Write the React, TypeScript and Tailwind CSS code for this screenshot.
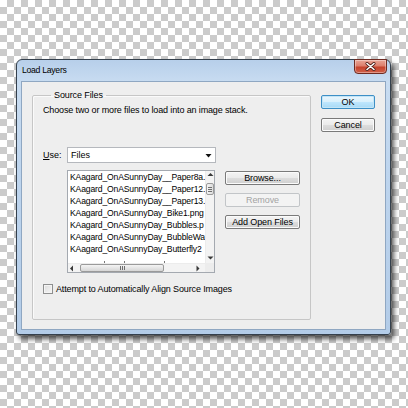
import React from "react";

const files = [
  "KAagard_OnASunnyDay__Paper8a.",
  "KAagard_OnASunnyDay__Paper12.",
  "KAagard_OnASunnyDay__Paper13.",
  "KAagard_OnASunnyDay_Bike1.png",
  "KAagard_OnASunnyDay_Bubbles.p",
  "KAagard_OnASunnyDay_BubbleWa",
  "KAagard_OnASunnyDay_Butterfly2",
];

function Tri({ dir }: { dir: "up" | "down" | "left" | "right" }) {
  const pts =
    dir === "up"
      ? "0.5,4 3.5,1 6.5,4"
      : dir === "down"
      ? "0.5,1.5 3.5,4.5 6.5,1.5"
      : dir === "left"
      ? "4,0.5 1,3.5 4,6.5"
      : "1.5,0.5 4.5,3.5 1.5,6.5";
  return (
    <svg width="7" height="7" viewBox="0 0 7 7" className="block">
      <polygon points={pts} fill="#3a3a3a" />
    </svg>
  );
}

function Btn({
  children,
  disabled,
  primary,
  w,
}: {
  children: React.ReactNode;
  disabled?: boolean;
  primary?: boolean;
  w: string;
}) {
  return (
    <div
      className={
        "h-[14px] flex items-center justify-center rounded-[2px] border text-[9px] tracking-[-0.1px] leading-none " +
        w +
        " " +
        (disabled
          ? "border-[#c2c5c8] bg-[#f3f3f3] text-[#a3a3a3]"
          : primary
          ? "border-[#3d8fc6] bg-[linear-gradient(180deg,#eaf6fd_0%,#d9f0fc_48%,#bee6fd_52%,#a7d9f5_100%)] text-black shadow-[inset_0_0_0_1px_#c4e5f6]"
          : "border-[#7a7a7a] bg-[linear-gradient(180deg,#f4f4f4_0%,#ebebeb_48%,#dddddd_52%,#cfcfcf_100%)] text-black shadow-[inset_0_0_0_1px_#fbfbfb]")
      }
    >
      {children}
    </div>
  );
}

export default function App() {
  return (
    <div className="w-[408px] h-[408px] overflow-hidden bg-[image:repeating-conic-gradient(#cbcbcb_0%_25%,#ffffff_0%_50%)] bg-[length:14px_14px] pt-[59px] pl-[16px] font-['Liberation_Sans',Arial,sans-serif] text-black">
      <div className="w-[375px] h-[276px] flex flex-col rounded-t-[6px] rounded-b-[3px] border border-[#34404d] bg-[linear-gradient(180deg,#b7cfea_0%,#c8dcf1_8%,#bed5ee_40%,#b3cce8_100%)] shadow-[3px_4px_5px_rgba(0,0,0,0.65)]">
        {/* title bar */}
        <div className="h-[21px] flex items-start justify-between pl-[5px] pr-[3px]">
          <span className="text-[8.7px] leading-[20px] tracking-[-0.3px]">Load Layers</span>
          <div className="-mt-px w-[33px] h-[15px] flex items-center justify-center rounded-b-[4px] border border-[#6e2b22] bg-[linear-gradient(180deg,#e9a596_0%,#dc7f6d_45%,#c5432d_55%,#d0614a_100%)] shadow-[inset_0_0_0_1px_rgba(255,255,255,0.35)]">
            <svg width="11" height="9" viewBox="0 0 11 9">
              <path d="M2 1.5 L9 7.5 M9 1.5 L2 7.5" stroke="#4a1a14" strokeWidth="3" strokeLinecap="round" />
              <path d="M2 1.5 L9 7.5 M9 1.5 L2 7.5" stroke="#ffffff" strokeWidth="1.6" strokeLinecap="round" />
            </svg>
          </div>
        </div>
        {/* client area */}
        <div className="mx-[4px] mb-[4px] flex-1 border border-[#8fa7c2] bg-[#eeeeee] pt-[7px] pl-[10px] flex items-start gap-[10px]">
          <fieldset className="w-[279px] h-[231px] border border-[#c6c6c6] rounded-[2px] px-[10px] pt-[3px] shadow-[inset_1px_1px_0_#fafafa]">
            <legend className="ml-[8px] px-[3px] text-[9px] tracking-[-0.1px] leading-[12px]">Source Files</legend>
            <div className="text-[9px] tracking-[-0.13px] leading-[12px] whitespace-nowrap">
              Choose two or more files to load into an image stack.
            </div>
            <div className="mt-[31px] flex items-center">
              <div className="w-[24px] text-[9px] leading-[12px]">
                <span className="underline">U</span>se:
              </div>
              <div className="w-[149px] h-[16px] border border-[#b5b8bd] bg-white flex items-center justify-between pl-[3px] pr-[3px]">
                <span className="text-[9px] leading-none">Files</span>
                <svg width="7" height="5" viewBox="0 0 7 5">
                  <polygon points="0.5,1 6.5,1 3.5,4.5" fill="#111" />
                </svg>
              </div>
            </div>
            <div className="mt-[7px] flex items-start">
              <div className="ml-[24px] w-[148px] h-[103px] border border-[#a4a9b0] bg-white flex flex-col">
                <div className="flex flex-1 min-h-0">
                  <div className="flex-1 min-w-0 overflow-hidden">
                    {files.map((f) => (
                      <div
                        key={f}
                        className="h-[12px] pl-[2px] text-[8.6px] leading-[12px] whitespace-nowrap tracking-[-0.15px]"
                      >
                        {f}
                      </div>
                    ))}
                    <div className="h-[8px] overflow-hidden pl-[2px] flex items-end gap-[19px]">
                      <div className="ml-[34px] w-px h-[2px] bg-[#777]" />
                      <div className="w-px h-[2px] bg-[#777]" />
                      <div className="ml-[20px] w-px h-[2px] bg-[#777]" />
                    </div>
                  </div>
                  <div className="w-[9px] bg-[#f3f3f3] border-l border-[#ececec] flex flex-col items-center">
                    <div className="h-[9px] flex items-center justify-center">
                      <Tri dir="up" />
                    </div>
                    <div className="mt-[3px] w-[8px] h-[12px] rounded-[2px] border border-[#9a9a9a] bg-[linear-gradient(90deg,#f4f4f4,#dcdcdc)] flex flex-col items-center justify-center gap-[1px]">
                      <div className="w-[4px] h-px bg-[#6f6f6f]" />
                      <div className="w-[4px] h-px bg-[#6f6f6f]" />
                      <div className="w-[4px] h-px bg-[#6f6f6f]" />
                    </div>
                    <div className="flex-1" />
                    <div className="h-[9px] flex items-center justify-center">
                      <Tri dir="down" />
                    </div>
                  </div>
                </div>
                <div className="h-[9px] flex bg-[#f3f3f3] border-t border-[#ececec]">
                  <div className="flex-1 flex items-center">
                    <div className="w-[9px] flex items-center justify-center">
                      <Tri dir="left" />
                    </div>
                    <div className="ml-[3px] w-[84px] h-[8px] rounded-[2px] border border-[#9a9a9a] bg-[linear-gradient(180deg,#f4f4f4,#d6d6d6)] flex items-center justify-center gap-[1px]">
                      <div className="w-px h-[4px] bg-[#6f6f6f]" />
                      <div className="w-px h-[4px] bg-[#6f6f6f]" />
                      <div className="w-px h-[4px] bg-[#6f6f6f]" />
                    </div>
                    <div className="flex-1" />
                    <div className="w-[9px] mr-[2px] flex items-center justify-center">
                      <Tri dir="right" />
                    </div>
                  </div>
                  <div className="w-[9px] bg-[#ececec]" />
                </div>
              </div>
              <div className="ml-[10px] mt-[1px] flex flex-col gap-[8px]">
                <Btn w="w-[75px]">Browse...</Btn>
                <Btn w="w-[75px]" disabled>
                  Remove
                </Btn>
                <Btn w="w-[75px]">Add Open Files</Btn>
              </div>
            </div>
            <div className="mt-[10px] flex items-center gap-[3px]">
              <div className="w-[10px] h-[10px] border border-[#8e8f8f] bg-[linear-gradient(135deg,#dcdcdc,#f6f6f6)] shadow-[inset_0_0_0_1px_#f4f4f4]" />
              <span className="text-[9px] tracking-[-0.13px] leading-[12px]">Attempt to Automatically Align Source Images</span>
            </div>
          </fieldset>
          <div className="mt-[6px] flex flex-col gap-[9px]">
            <Btn w="w-[54px]" primary>
              OK
            </Btn>
            <Btn w="w-[54px]">Cancel</Btn>
          </div>
        </div>
      </div>
    </div>
  );
}
